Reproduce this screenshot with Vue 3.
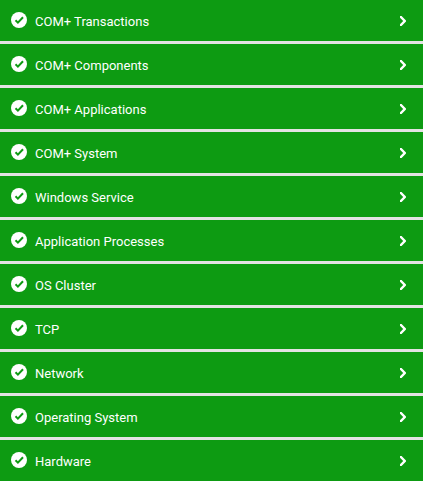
<template>
  <div class="status-list">
    <button v-for="name in layers" :key="name" type="button" class="status-row">
      <svg class="status-icon" viewBox="0 0 16 16" aria-hidden="true">
        <circle cx="8" cy="8" r="8" fill="#fff" />
        <path d="M4.5 8.3 L6.9 10.6 L12 5.2" fill="none" stroke="#0d9b12" stroke-width="2" />
      </svg>
      <span class="status-name">{{ name }}</span>
      <svg class="status-arrow" viewBox="0 0 8 11" aria-hidden="true">
        <path d="M1 0 H2.6 L7 4.4 V5.6 L2.6 10 H1 V8.2 L4.2 5 L1 1.8 Z" fill="#fff" />
      </svg>
    </button>
  </div>
</template>

<script setup>
const layers = [
  'COM+ Transactions',
  'COM+ Components',
  'COM+ Applications',
  'COM+ System',
  'Windows Service',
  'Application Processes',
  'OS Cluster',
  'TCP',
  'Network',
  'Operating System',
  'Hardware',
]
</script>

<style>
body {
  background: #e3e3e3;
}
</style>

<style scoped>
.status-list {
  display: flex;
  flex-direction: column;
  gap: 3px;
}
.status-row {
  display: flex;
  align-items: flex-start;
  gap: 8px;
  width: 100%;
  margin: 0;
  padding: 12px 16px 10px 11px;
  border: 0;
  background: #0d9b12;
  color: #fff;
  font-family: Roboto, "Liberation Sans", sans-serif;
  font-size: 13px;
  line-height: 19px;
  text-align: left;
  cursor: pointer;
}
.status-icon {
  flex: none;
  width: 16px;
  height: 16px;
}
.status-name {
  flex: 1;
}
.status-arrow {
  flex: none;
  align-self: center;
  width: 8px;
  height: 11px;
}
</style>
